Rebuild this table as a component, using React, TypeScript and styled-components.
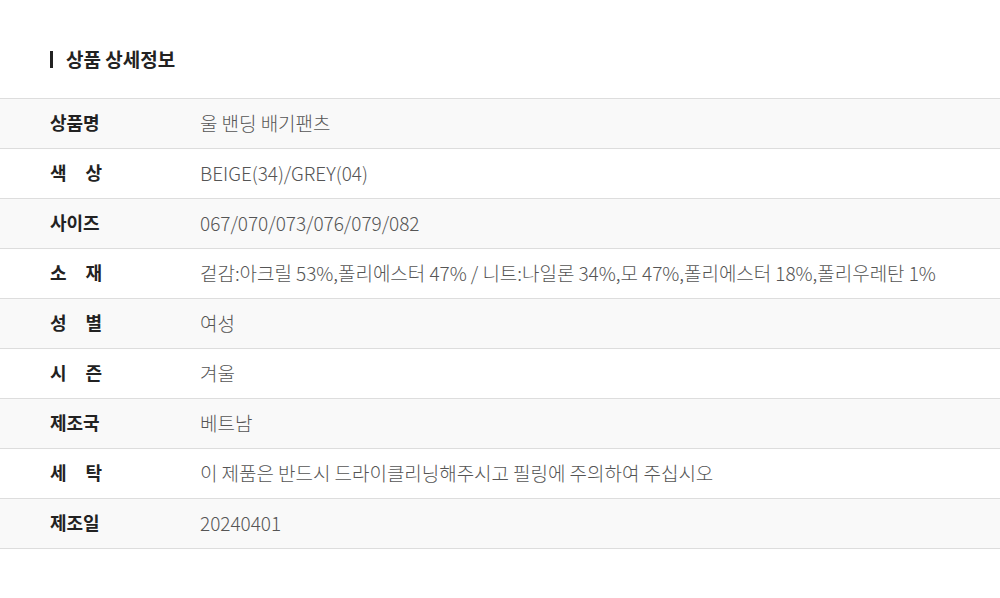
import React from "react";
import styled, { createGlobalStyle } from "styled-components";

const GlobalStyle = createGlobalStyle`
  html, body {
    margin: 0;
    padding: 0;
    background: #fff;
  }
  body {
    font-family: "Noto Sans CJK KR", "Noto Sans", sans-serif;
  }
`;

interface Row {
  label: string;
  value: string;
  spaced?: boolean;
}

const rows: Row[] = [
  { label: "상품명", value: "울 밴딩 배기팬츠" },
  { label: "색 상", value: "BEIGE(34)/GREY(04)", spaced: true },
  { label: "사이즈", value: "067/070/073/076/079/082" },
  {
    label: "소 재",
    value:
      "겉감:아크릴 53%,폴리에스터 47% / 니트:나일론 34%,모 47%,폴리에스터 18%,폴리우레탄 1%",
    spaced: true,
  },
  { label: "성 별", value: "여성", spaced: true },
  { label: "시 즌", value: "겨울", spaced: true },
  { label: "제조국", value: "베트남" },
  {
    label: "세 탁",
    value: "이 제품은 반드시 드라이클리닝해주시고 필링에 주의하여 주십시오",
    spaced: true,
  },
  { label: "제조일", value: "20240401" },
];

function App() {
  return (
    <>
      <GlobalStyle />
      <Section>
        <Heading>상품 상세정보</Heading>
        <Table>
          {rows.map((row, i) => (
            <TableRow key={row.label} $shaded={i % 2 === 0}>
              <Label>
                <LabelText $spaced={row.spaced}>{row.label}</LabelText>
              </Label>
              <Value>{row.value}</Value>
            </TableRow>
          ))}
        </Table>
      </Section>
    </>
  );
}

const Section = styled.section`
  padding-top: 44px;
`;

const Heading = styled.h2`
  display: flex;
  align-items: center;
  margin: 0 0 25px 50px;
  height: 29px;
  font-size: 19px;
  font-weight: 700;
  letter-spacing: 0;
  color: #222;

  &::before {
    content: "";
    width: 3px;
    height: 17px;
    background: #222;
    margin-right: 13px;
    margin-top: 1px;
  }
`;

const Table = styled.div`
  border-top: 1px solid #dddddd;
`;

const TableRow = styled.div<{ $shaded: boolean }>`
  display: flex;
  align-items: center;
  box-sizing: border-box;
  height: 50px;
  padding-bottom: 3px;
  border-bottom: 1px solid #dddddd;
  background: ${({ $shaded }) => ($shaded ? "#f9f9f9" : "#fff")};
`;

const Label = styled.div`
  width: 150px;
  padding-left: 50px;
  flex-shrink: 0;
`;

const LabelText = styled.span<{ $spaced?: boolean }>`
  display: inline-block;
  width: 52px;
  font-size: 18px;
  font-weight: 700;
  letter-spacing: -0.1px;
  color: #222;
  text-align: left;
  text-align-last: ${({ $spaced }) => ($spaced ? "justify" : "auto")};
`;

const Value = styled.div`
  font-size: 19px;
  font-weight: 300;
  letter-spacing: -0.04px;
  color: #555;
  white-space: nowrap;
`;

export default App;
